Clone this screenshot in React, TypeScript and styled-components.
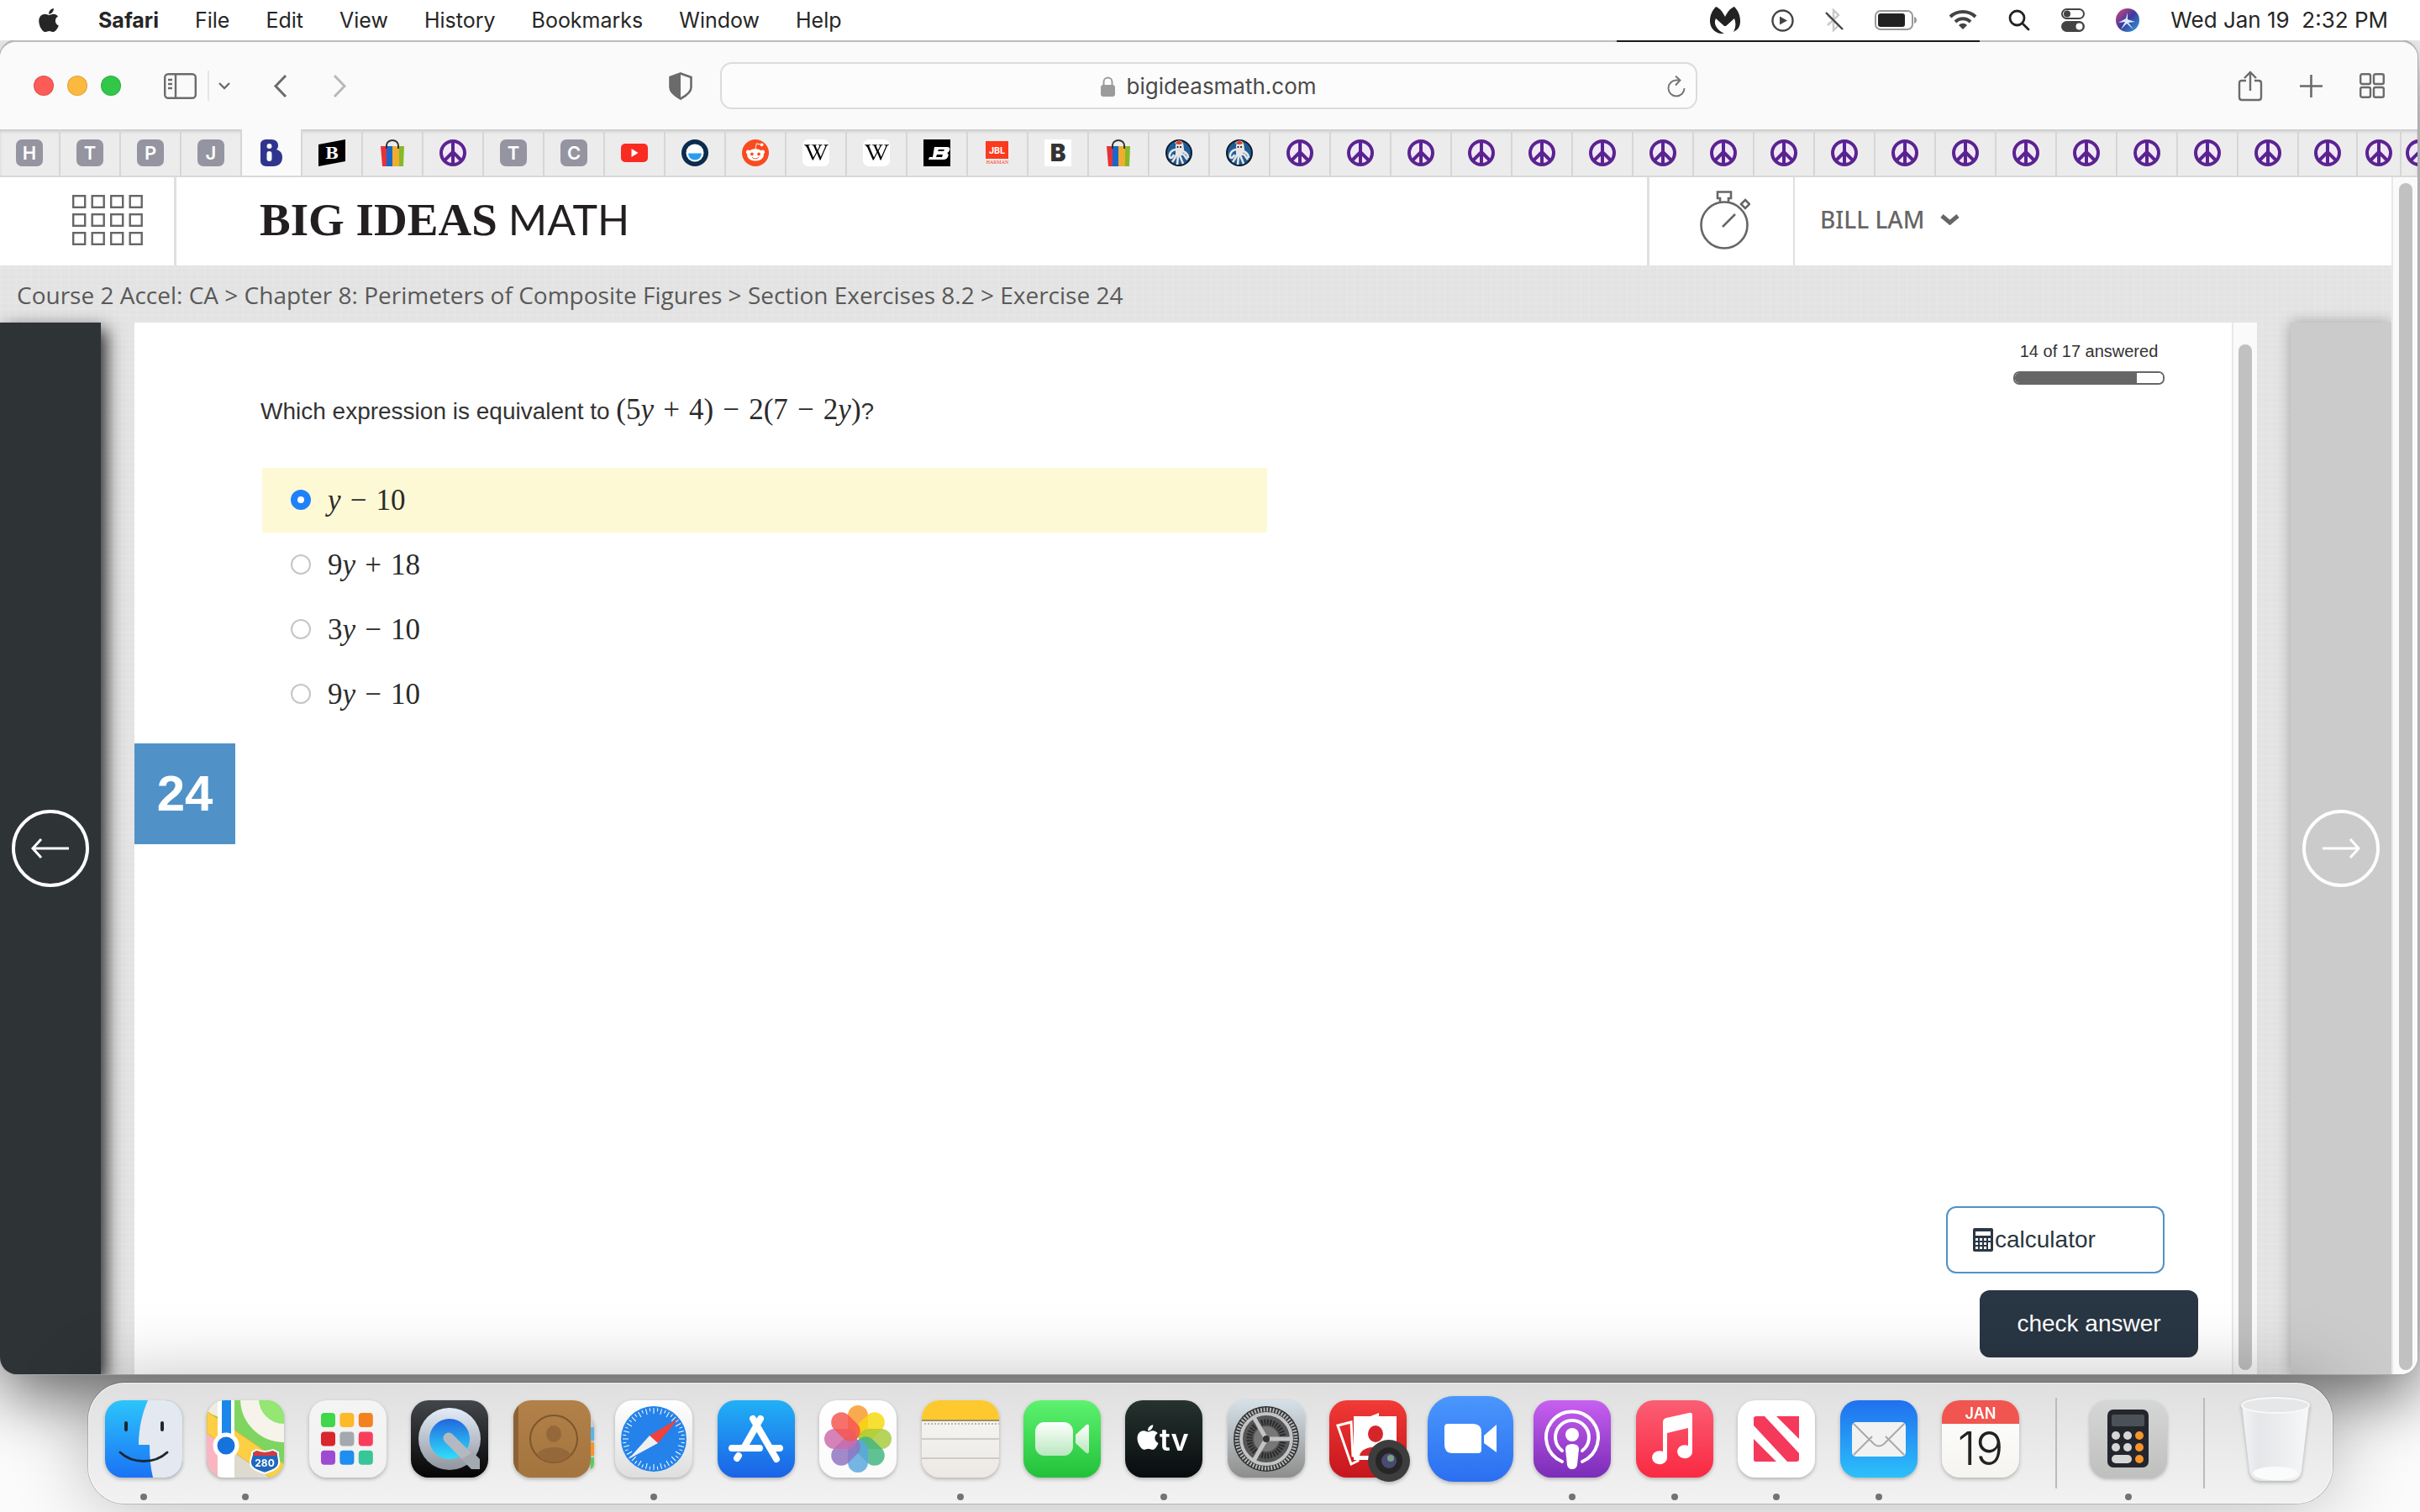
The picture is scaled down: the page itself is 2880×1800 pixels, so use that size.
import React from "react";
import styled, { createGlobalStyle, css } from "styled-components";
import { FaApple, FaWikipediaW, FaRedditAlien } from "react-icons/fa";

const UI = `Inter, "Liberation Sans", sans-serif`;
const HELV = `"Liberation Sans", Arial, sans-serif`;
const OPEN = `"Open Sans", "Noto Sans", sans-serif`;
const MATH = `"Liberation Serif", "Times New Roman", serif`;

const Global = createGlobalStyle`
  * { box-sizing: border-box; }
  body { margin: 0; background: #fbfbfb; font-family: ${UI}; color: #262626; }
  button { border: 0; padding: 0; background: none; font: inherit; color: inherit; cursor: pointer; }
  svg { display: block; flex: none; }
`;

const Desktop = styled.div`
  min-height: 100vh;
  display: flex;
  flex-direction: column;
  overflow: hidden;
`;

/* ---------- menu bar ---------- */

const MenuBar = styled.header`
  z-index: 1;
  height: 48px;
  display: flex;
  align-items: center;
  justify-content: space-between;
  padding: 0 38px 0 42px;
  font-size: 25px;
  line-height: 32px;
  background: #fff;
`;
const MenuGroup = styled.nav`
  display: flex;
  align-items: center;
  gap: 43px;
`;
const MenuItem = styled.button<{ $bold?: boolean }>`
  font-weight: ${(p) => (p.$bold ? 700 : 400)};
`;
const StatusGroup = styled.div`
  display: flex;
  align-items: center;
  gap: 37px;
`;
const Clock = styled.time`
  white-space: pre;
  font-size: 26px;
`;

/* ---------- browser window ---------- */

const Window = styled.section`
  flex: 1;
  display: flex;
  flex-direction: column;
  margin-right: 3px;
  border-radius: 20px;
  overflow: hidden;
  background: #fff;
  border-top: 2px solid #bdbdbd;
  box-shadow: 0 0 0 1px #a9a9a9, 0 24px 80px rgba(0, 0, 0, 0.62);
`;
const Notch = styled.span`
  z-index: 2;
  align-self: flex-end;
  width: 432px;
  height: 2px;
  margin: 0 524px -2px 0;
  background: #1a1a1a;
`;
const Toolbar = styled.div`
  height: 104px;
  display: grid;
  grid-template-columns: 1fr 40.4% 1fr;
  align-items: center;
  background: #fafafa;
  color: #6b6b6b;
`;
const ToolbarLeft = styled.div`
  display: flex;
  align-items: center;
  padding: 0 33px 0 40px;
`;
const ToolbarRight = styled.div`
  display: flex;
  align-items: center;
  justify-content: flex-end;
  gap: 44px;
  padding-right: 39px;
`;
const Lights = styled.div`
  display: flex;
  gap: 16px;
  margin-right: 51px;
`;
const Light = styled.button<{ $c: string }>`
  width: 24px;
  height: 24px;
  border-radius: 50%;
  background: ${(p) => p.$c};
  box-shadow: inset 0 0 0 1px rgba(0, 0, 0, 0.12);
`;
const ToolButton = styled.button<{ $gap?: number; $push?: boolean }>`
  display: flex;
  margin-left: ${(p) => (p.$push ? "auto" : `${p.$gap ?? 0}px`)};
`;
const ToolDivider = styled.span`
  width: 2px;
  height: 36px;
  margin-left: 13px;
  background: #e6e6e6;
`;
const UrlField = styled.div`
  height: 56px;
  display: grid;
  grid-template-columns: 1fr auto 1fr;
  align-items: center;
  padding-top: 2px;
  border: 2px solid #dcdcdc;
  border-radius: 14px;
  background: #fcfcfc;
`;
const UrlLabel = styled.label`
  grid-column: 2;
  display: flex;
  align-items: center;
  gap: 13px;
`;
const UrlInput = styled.input`
  width: 226px;
  border: 0;
  padding: 0;
  outline: 0;
  background: transparent;
  font: 400 26px/32px ${UI};
  color: #4a4a4a;
`;
const Reload = styled.button`
  justify-self: end;
  margin-right: 12px;
`;

const TabBar = styled.nav`
  height: 57px;
  display: flex;
  overflow: hidden;
  border-bottom: 2px solid #d9d9d9;
  background: #ececec;
  box-shadow: inset 0 3px 4px -1px rgba(0, 0, 0, 0.18);
`;
const Tab = styled.button<{ $w: number; $active?: boolean }>`
  flex: none;
  width: ${(p) => p.$w}px;
  display: flex;
  align-items: center;
  justify-content: center;
  border-right: 2px solid #d6d6d6;
  ${(p) => p.$active && css`background: #fafafa;`}
`;
const LetterIcon = styled.span`
  width: 32px;
  height: 32px;
  border-radius: 7px;
  background: #9495a0;
  color: #fff;
  font: 600 22px/32px ${UI};
  text-align: center;
`;
const WikiIcon = styled.span`
  width: 32px;
  height: 32px;
  border-radius: 7px;
  background: #fff;
  color: #000;
  display: flex;
  align-items: center;
  justify-content: center;
`;

/* ---------- page ---------- */

const Page = styled.div`
  flex: 1;
  display: flex;
`;
const PageBody = styled.div`
  flex: 1;
  min-width: 0;
  display: flex;
  flex-direction: column;
  background-color: #e3e3e3;
  background-image: repeating-linear-gradient(90deg, rgba(255, 255, 255, 0.08) 0 2px, transparent 2px 9px),
    repeating-linear-gradient(0deg, rgba(255, 255, 255, 0.08) 0 2px, transparent 2px 7px);
`;
const ScrollTrack = styled.div<{ $w: number; $top: number }>`
  flex: none;
  width: ${(p) => p.$w}px;
  display: flex;
  justify-content: center;
  padding: ${(p) => p.$top}px 0 5px;
  background: #fafafa;
  border-left: 2px solid #e8e8e8;
`;
const ScrollThumb = styled.div`
  width: 16px;
  border-radius: 8px;
  background: #c1c1c1;
`;
const SiteHeader = styled.header`
  height: 105px;
  display: flex;
  padding-bottom: 3px;
  background: #fff;
  color: #666;
`;
const AppsButton = styled.button`
  width: 210px;
  margin-bottom: -3px;
  display: flex;
  align-items: center;
  padding: 0 0 3px 86px;
  border-right: 3px solid #e0e0e0;
`;
const Brand = styled.a`
  flex: 1;
  display: flex;
  align-items: baseline;
  gap: 13px;
  padding: 14px 0 0 99px;
  color: #231f20;
  text-decoration: none;
  line-height: 72px;
`;
const BrandSerif = styled.span`
  font-family: ${MATH};
  font-weight: 700;
  font-size: 55px;
`;
const BrandSans = styled.span`
  font-family: Lato, sans-serif;
  font-size: 50px;
`;
const TimerButton = styled.button`
  width: 174px;
  margin-bottom: -3px;
  display: flex;
  align-items: center;
  justify-content: center;
  padding: 0 0 3px 8px;
  border-left: 3px solid #e0e0e0;
`;
const UserButton = styled.button`
  width: 712px;
  margin-bottom: -3px;
  display: flex;
  align-items: center;
  gap: 19px;
  padding: 0 0 5px 30px;
  border-left: 2px solid #e0e0e0;
  font: 500 28px/40px "Noto Sans", sans-serif;
`;
const Crumbs = styled.nav`
  height: 68px;
  padding: 0 20px;
  font: 400 28px/70px ${OPEN};
  color: #595959;
  white-space: nowrap;
`;
const Crumb = styled.a`
  color: inherit;
  text-decoration: none;
`;
const Stage = styled.div`
  flex: 1;
  display: flex;
`;
const SideNav = styled.button<{ $next?: boolean }>`
  width: 120px;
  display: flex;
  align-items: center;
  justify-content: center;
  color: #fff;
  background: ${(p) => (p.$next ? "#cbcbcb" : "#2e3336")};
  box-shadow: ${(p) => (p.$next ? "0 0 16px rgba(0,0,0,.3)" : "6px 8px 20px rgba(0,0,0,.85)")};
`;
const Card = styled.main`
  flex: 1;
  display: flex;
  margin: 0 40px;
  background: #fff;
  font-family: ${HELV};
  color: #333;
`;
const NumberBadge = styled.div`
  flex: none;
  width: 120px;
  height: 120px;
  margin-top: 501px;
  background: #5092c8;
  color: #fff;
  font-weight: 700;
  font-size: 60px;
  line-height: 120px;
  text-align: center;
`;
const Content = styled.div`
  flex: 1;
  display: flex;
  flex-direction: column;
  padding: 0 0 20px 30px;
`;
const TopRow = styled.div`
  display: flex;
  justify-content: space-between;
  padding-right: 80px;
`;
const Question = styled.h1`
  margin: 0;
  padding-top: 84px;
  font-size: 28px;
  line-height: 40px;
  font-weight: 400;
`;
const Math = styled.span`
  font-family: ${MATH};
  font-size: 35px;
  line-height: 40px;
  color: #2b2b2b;
`;
const Op = styled.span`
  display: inline-block;
  width: 26px;
  margin: 0 8px;
  text-align: center;
`;
const Progress = styled.label`
  width: 180px;
  display: flex;
  flex-direction: column;
  align-items: center;
  gap: 12px;
  padding-top: 22px;
  font-size: 20px;
  line-height: 24px;
`;
const Meter = styled.progress`
  appearance: none;
  width: 180px;
  height: 16px;
  border: 2px solid #666;
  border-radius: 7px;
  overflow: hidden;
  background: #fff;
  &::-webkit-progress-bar { background: #fff; }
  &::-webkit-progress-value { background: #666; }
`;
const Choices = styled.fieldset`
  width: 51%;
  border: 0;
  margin: 47px 0 0 2px;
  padding: 0;
`;
const Choice = styled.label<{ $on?: boolean }>`
  height: 77px;
  display: flex;
  align-items: center;
  gap: 20px;
  padding-left: 34px;
  background: ${(p) => (p.$on ? "#fdf9d5" : "transparent")};
`;
const Radio = styled.input`
  appearance: none;
  width: 24px;
  height: 24px;
  margin: 0 0 2px;
  border: 2px solid #c6c6c6;
  border-radius: 50%;
  background: #fff;
  &:checked {
    border: 8px solid #1e82fa;
  }
`;
const Actions = styled.div`
  margin-top: auto;
  display: flex;
  flex-direction: column;
  align-items: flex-end;
  gap: 20px;
  padding-right: 40px;
`;
const ActionButton = styled.button<{ $solid?: boolean }>`
  width: 260px;
  height: 80px;
  display: flex;
  align-items: center;
  gap: 2px;
  border-radius: 12px;
  font-size: 28px;
  line-height: 40px;
  ${(p) =>
    p.$solid
      ? css`
          justify-content: center;
          background: #293644;
          color: #fff;
        `
      : css`
          margin-right: 40px;
          padding-left: 30px;
          background: #fff;
          border: 2px solid #5092c8;
          color: #293640;
        `}
`;

/* ---------- dock ---------- */

const Dock = styled.nav`
  z-index: 1;
  height: 144px;
  margin: 10px 104px 10px 105px;
  padding: 0 16px 0 5px;
  display: grid;
  grid-template-columns: repeat(19, 1fr) 58px 114px 66px 104px;
  border-radius: 44px;
  background: linear-gradient(#dfdfdf, #e9e9e9 50%, #f2f2f2);
  box-shadow: 0 0 0 1px rgba(0, 0, 0, 0.18), 0 0 90px rgba(0, 0, 0, 0.28), inset 0 0 0 1px rgba(255, 255, 255, 0.5);
`;
const DockItem = styled.button<{ $open?: boolean }>`
  display: flex;
  flex-direction: column;
  align-items: center;
  justify-content: space-between;
  padding: 15px 0 4px;
  &::after {
    content: "";
    width: 8px;
    height: 8px;
    border-radius: 50%;
    background: ${(p) => (p.$open ? "#737373" : "transparent")};
  }
`;
const DockRule = styled.span`
  width: 2px;
  height: 108px;
  margin: 18px auto 0;
  background: #bbb;
`;
const DockSvg = styled.svg`
  width: 104px;
  height: 104px;
  overflow: visible;
  filter: drop-shadow(0 2px 2px rgba(0, 0, 0, 0.25));
`;

/* ---------- tab icons ---------- */

const Peace = () => (
  <svg width="32" height="32" viewBox="0 0 32 32" fill="none" stroke="#5b2391" strokeWidth="4">
    <circle cx="16" cy="16" r="14" fill="#f0e9f5" />
    <path d="M16 2v28M16 15 6 25M16 15l10 10" />
  </svg>
);
const Bag = () => (
  <svg width="32" height="32" viewBox="0 0 32 32">
    <path d="M2 8h7v24H4z" fill="#e53238" />
    <path d="M9 8h7v24H9z" fill="#1b66c9" />
    <path d="M16 8h8v24h-8z" fill="#f0ad2e" />
    <path d="M24 8h6l-1 24h-5z" fill="#86b82b" />
    <path d="M9 11V7a7 6 0 0 1 14 0v4" fill="none" stroke="#333" strokeWidth="2" />
  </svg>
);
const BigIdeas = () => (
  <svg width="26" height="32" viewBox="0 0 26 32">
    <path d="M7 0h6c5 0 8 3 8 7 0 3-1 4-2 5 4 1 7 4 7 9 0 7-4 11-11 11H7c-4 0-7-3-7-6V6c0-4 3-6 7-6z" fill="#2f358e" />
    <circle cx="10.500" cy="8" r="3" fill="#fafafa" />
    <rect x="7.500" y="14" width="6" height="12" rx="3" fill="#fafafa" />
  </svg>
);
const SlantB = () => (
  <svg width="32" height="32" viewBox="0 0 32 32">
    <path d="M0 6 32 0v26L0 32z" fill="#000" />
    <text x="16" y="23" textAnchor="middle" fontFamily="DejaVu Serif, serif" fontWeight="700" fontSize="19" fill="#fff">B</text>
  </svg>
);
const YouTube = () => (
  <svg width="32" height="32" viewBox="0 0 32 32">
    <rect y="5" width="32" height="22" rx="5" fill="#fa2b20" />
    <path d="m12.500 11 8 5-8 5z" fill="#fff" />
  </svg>
);
const Ring = () => (
  <svg width="32" height="32" viewBox="0 0 32 32">
    <circle cx="16" cy="16" r="16" fill="#0c2c4d" />
    <circle cx="16" cy="16" r="10.500" fill="#fff" />
    <path d="M8 16.500h16a8 8 0 0 1-16 0z" fill="#2f9bf0" />
  </svg>
);
const Reddit = () => (
  <svg width="32" height="32" viewBox="0 0 32 32">
    <circle cx="16" cy="16" r="16" fill="#f84b20" />
    <FaRedditAlien x="4" y="3" size={24} color="#fff" />
  </svg>
);
const SportB = () => (
  <svg width="32" height="32" viewBox="0 0 32 32">
    <path d="M0 0h32v32H0z" />
    <path d="M13 9h15c3 0 4 2 3 4s-2 3-3 3c2 1 2 3 1 5s-3 3-5 3H6l1-3h4z" fill="#fff" />
    <path d="m18 12-1 2h7l1-2zM16 18l-1 3h7l1-3z" />
  </svg>
);
const Jbl = () => (
  <svg width="32" height="32" viewBox="0 0 32 32">
    <path d="M2 2h27v21H2z" fill="#fb3a1e" />
    <text x="15.500" y="17" textAnchor="middle" fontFamily="Roboto, sans-serif" fontWeight="700" fontSize="11" fill="#fff">JBL</text>
    <text x="16" y="29" textAnchor="middle" fontFamily="Liberation Serif, serif" fontSize="6" fill="#fb3a1e">HARMAN</text>
  </svg>
);
const WhiteB = () => (
  <svg width="32" height="32" viewBox="0 0 32 32">
    <path d="M0 0h32v32H0z" fill="#fff" />
    <text x="16" y="26" textAnchor="middle" fontFamily="Inter, sans-serif" fontWeight="900" fontSize="28" fill="#333">B</text>
  </svg>
);
const Squid = () => (
  <svg width="32" height="32" viewBox="0 0 32 32">
    <circle cx="16" cy="16" r="15" fill="#1f5c94" stroke="#111a2e" strokeWidth="2" />
    <path d="M12 5c2-3 7-3 8 1l1 8c4 2 6 4 6 8M13 12c-5 0-9 4-8 9 2 2 4 0 5-3m3 0c-1 4-3 6-5 9m7-8-1 11m3-11 4 10m0-12 5 7" fill="none" stroke="#e6e6e6" strokeWidth="2.600" />
    <path d="M12 7c0-3 8-3 8 0l1 12h-9z" fill="#e6e6e6" />
    <path d="M12 5c1-4 7-4 8 0l-4 1z" fill="#d33a26" />
    <circle cx="14.500" cy="9" r="1" /><circle cx="18" cy="9" r="1" />
  </svg>
);

const letter = (l: string) => () => <LetterIcon>{l}</LetterIcon>;
const Wiki = () => (
  <WikiIcon>
    <FaWikipediaW size={29} />
  </WikiIcon>
);

type TabData = { name: string; icon: React.FC; width: number; active?: boolean };
const favicons: [string, React.FC][] = [
  ["H", letter("H")], ["T", letter("T")], ["P", letter("P")], ["J", letter("J")],
  ["Big Ideas Math", BigIdeas], ["B", SlantB], ["Shopping", Bag], ["Peace", Peace],
  ["T", letter("T")], ["C", letter("C")], ["YouTube", YouTube], ["Ring", Ring],
  ["Reddit", Reddit], ["Wikipedia", Wiki], ["Wikipedia", Wiki], ["Sport", SportB],
  ["JBL", Jbl], ["B", WhiteB], ["Shopping", Bag], ["Squid", Squid], ["Squid", Squid],
];
const tabs: TabData[] = [
  ...favicons.map(([name, icon], i) => ({ name, icon, width: 72, active: i === 4 })),
  ...Array.from({ length: 20 }, (_, i) => ({ name: "Peace", icon: Peace, width: i === 17 ? 70 : i === 18 ? 52 : i === 19 ? 44 : 72 })),
];

/* ---------- status icons ---------- */

const StatusIcons = () => (
  <>
    <svg width="36" height="32" viewBox="0 0 36 32" fill="#222">
      <path d="M7 0c5 2 8 6 11 12C21 6 24 2 29 0c5 5 7 11 7 17 0 6-2 10-8 13 3-6 3-11 1-16l-10 9h-2L7 14c-3 6 0 13 10 18C6 33 0 25 0 17 0 11 2 5 7 0z" />
    </svg>
    <svg width="27" height="27" viewBox="0 0 27 27" fill="none" stroke="#444" strokeWidth="2.400">
      <circle cx="13.500" cy="13.500" r="12" />
      <path d="m10 8.500 9 5-9 5z" fill="#444" stroke="none" />
    </svg>
    <svg width="22" height="28" viewBox="0 0 22 28" fill="none" strokeWidth="2.400">
      <path d="M3 8l13 12-6 6V2l6 6L3 20" stroke="#c9c9c9" />
      <path d="m1 5 20 20" stroke="#444" />
    </svg>
    <svg width="51" height="24" viewBox="0 0 51 24">
      <rect x="1" y="1" width="44" height="22" rx="6" fill="none" stroke="#999" strokeWidth="2" />
      <rect x="4" y="4" width="32" height="16" rx="3" fill="#222" />
      <path d="M47 8c4 1 4 7 0 8z" fill="#999" />
    </svg>
    <svg width="34" height="26" viewBox="0 0 34 26" fill="none" stroke="#444" strokeWidth="4">
      <path d="M2 9c8-8 22-8 30 0M8 15c5-5 13-5 18 0" />
      <path d="m12 19 5 5 5-5c-3-3-7-3-10 0z" fill="#444" stroke="none" />
    </svg>
    <svg width="26" height="26" viewBox="0 0 26 26" fill="none" stroke="#222" strokeWidth="2.800">
      <circle cx="10.500" cy="10.500" r="8.500" />
      <path d="m17 17 7 7" strokeLinecap="round" />
    </svg>
    <svg width="28" height="28" viewBox="0 0 28 28">
      <rect x="1" y="1" width="26" height="11" rx="5.500" fill="none" stroke="#444" strokeWidth="2" />
      <circle cx="7" cy="6.500" r="4" fill="#444" />
      <rect y="15" width="28" height="13" rx="6.500" fill="#444" />
      <circle cx="21.500" cy="21.500" r="4" fill="#fff" />
    </svg>
    <svg width="28" height="28" viewBox="0 0 28 28">
      <defs>
        <linearGradient id="siri" x2="1" y2="1">
          <stop stopColor="#e0447e" /><stop offset=".5" stopColor="#3d3a9c" /><stop offset="1" stopColor="#2aa9e0" />
        </linearGradient>
      </defs>
      <circle cx="14" cy="14" r="14" fill="url(#siri)" />
      <path d="M14 5v8l9 3-8 1 6 8-8-7-7 7 5-9-8 1 9-5z" fill="#d8ecff" />
    </svg>
  </>
);

/* ---------- dock icons, drawn on a 92 unit tile with a 6 unit border ---------- */

const Tile = ({ id, a, b, children, over }: { id: string; a: string; b: string; children?: React.ReactNode; over?: React.ReactNode }) => (
  <DockSvg viewBox="-6 -6 104 104" aria-hidden="true">
    <defs>
      <linearGradient id={id} x2="0" y2="1"><stop stopColor={a} /><stop offset="1" stopColor={b} /></linearGradient>
      <clipPath id={`${id}-clip`}><rect width="92" height="92" rx="21" /></clipPath>
    </defs>
    <g clipPath={`url(#${id}-clip)`}>
      <rect width="92" height="92" fill={`url(#${id})`} />
      {children}
    </g>
    {over}
  </DockSvg>
);

const Finder = () => (
  <Tile id="finder" a="#2cc5fb" b="#1a72f5">
    <path d="M51 0C44 16 40 34 40 53h13c0 14 1 27 4 39h35V0z" fill="#e4e8f0" />
    <path d="M25 27v8M68 27v8" stroke="#1c2733" strokeWidth="4" strokeLinecap="round" />
    <path d="M18 62c15 14 41 14 56 0" fill="none" stroke="#1c2733" strokeWidth="3" strokeLinecap="round" />
  </Tile>
);
const Maps = () => (
  <Tile id="maps" a="#7fd65f" b="#7cd360">
    <path d="M0 0h14v20L0 14z" fill="#f1ece2" />
    <path d="M0 38v54h34V50z" fill="#f9b6c2" />
    <path d="M30 92 34 50l58 42z" fill="#dedacf" />
    <path d="M0 13 92 76v22H84L0 39z" fill="#fccf45" stroke="#e9b53a" />
    <circle cx="92" cy="-2" r="41" fill="#93e772" stroke="#f5f3ea" strokeWidth="22" />
    <path d="M13 0h20v92H13z" fill="#fff" />
    <path d="M18 0h11v52H18z" fill="#1b87ea" />
    <circle cx="23" cy="54" r="13" fill="#1673dd" stroke="#fff" strokeWidth="5" />
    <path d="m54 62 5-3q10 4 20 0l6 3c-1 5 2 8 1 13-1 7-9 9-17 12-8-3-16-5-17-12-1-5 3-8 2-13z" fill="#2168bd" stroke="#fff" strokeWidth="2" />
    <path d="m56 62 4-2q9 4 18 0l5 2v4H56z" fill="#d8393e" />
    <text x="69" y="79" textAnchor="middle" fontFamily="Inter, sans-serif" fontWeight="700" fontSize="12" fill="#fff">280</text>
  </Tile>
);
const Launchpad = () => (
  <Tile id="launch" a="#f4f4f4" b="#f1f1f1">
    {["#42d64a", "#fcb928", "#f48120", "#d8262c", "#a3a9ad", "#f93e5c", "#9e4bd4", "#1e8ef0", "#37c59a"].map((c, i) => (
      <rect key={c} x={14 + (i % 3) * 22.4} y={15 + ((i - (i % 3)) / 3) * 22.4} width="17" height="17" rx="4" fill={c} />
    ))}
  </Tile>
);
const QuickTime = () => (
  <Tile id="qt" a="#43464b" b="#050505">
    <defs>
      <linearGradient id="qt-face" x2="0" y2="1"><stop stopColor="#2267dd" /><stop offset="1" stopColor="#2fe0fc" /></linearGradient>
      <linearGradient id="qt-ring" x2="0" y2="1"><stop stopColor="#e3ecfa" /><stop offset="1" stopColor="#8f959d" /></linearGradient>
    </defs>
    <circle cx="46" cy="46" r="37" fill="url(#qt-ring)" />
    <circle cx="46" cy="46" r="24" fill="url(#qt-face)" />
    <path d="M45 45 74 74" stroke="#b4b9c1" strokeWidth="13" strokeLinecap="round" />
    <path d="m60 70 12 12h10V70l-8-8z" fill="#a4a9b1" />
  </Tile>
);
const Contacts = () => (
  <Tile id="contacts" a="#b2814a" b="#a4743e" over={<><path d="M92 22q4 2 4 8v2h-4z" fill="#c9ccc9" /><path d="M92 32h4v16h-4z" fill="#5ab5e8" /><path d="M92 50h4v16h-4z" fill="#f59331" /><path d="M92 68h4v6q0 6-4 8z" fill="#5bcb5f" /></>}>
    <path d="M0 0h6v92H0z" fill="#8d6233" />
    <g fill="#94683a" stroke="#7e562b" strokeWidth="2">
      <circle cx="48" cy="46" r="28" fill="none" />
      <ellipse cx="48" cy="40" rx="9" ry="10" stroke="none" />
      <path d="M28 65c5-12 35-12 40 0-10 12-30 12-40 0z" stroke="none" />
    </g>
  </Tile>
);
const Safari = () => (
  <Tile id="safari" a="#ffffff" b="#dedede">
    <circle cx="46" cy="46" r="39" fill="#2482ea" />
    {Array.from({ length: 48 }, (_, i) => (
      <path key={i} d={i % 2 ? "M46 9v4" : "M46 9v7"} stroke="#fff" strokeWidth="1" transform={`rotate(${i * 7.5} 46 46)`} />
    ))}
    <path d="m75 22-24 29-10-9z" fill="#f4403b" />
    <path d="m16 70 25-28 10 9z" fill="#f0f0f0" />
  </Tile>
);
const AppStore = () => (
  <Tile id="store" a="#21b0f6" b="#1b62e6">
    <g stroke="#fff" strokeWidth="8" strokeLinecap="round">
      <path d="M51 22 31 57M42 22l28 48M17 57h33M63 57h11M23 69l2-3" />
    </g>
  </Tile>
);
const Photos = () => (
  <Tile id="photos" a="#ffffff" b="#fafafa">
    {["#f99a2c", "#f5d90f", "#a8cb3b", "#43b581", "#59a7df", "#8f74c0", "#cc6bab", "#f5564f"].map((c, i) => (
      <rect key={c} x="34" y="6" width="24" height="39" rx="12" fill={c} opacity=".84" transform={`rotate(${i * 45} 46 46)`} />
    ))}
  </Tile>
);
const Notes = () => (
  <Tile id="notes" a="#f8f7f5" b="#ece9e4">
    <path d="M0 0h92v23H0z" fill="#fdc92e" />
    <path d="M0 24h92" stroke="#9d9160" strokeWidth="2" />
    <path d="M3 28h89" stroke="#b5b5b5" strokeWidth="2" strokeDasharray="2 2" />
    <path d="M0 46h92M0 69h92" stroke="#cfccc7" strokeWidth="2" />
  </Tile>
);
const FaceTime = () => (
  <Tile id="facetime" a="#5df26f" b="#22c13a">
    <defs><linearGradient id="ft-body" x2="0" y2="1"><stop stopColor="#fdfffd" /><stop offset="1" stopColor="#b9e8bf" /></linearGradient></defs>
    <g fill="url(#ft-body)">
      <rect x="14" y="26" width="45" height="40" rx="11" />
      <path d="m62 41 13-12q3-1 3 2v30q0 3-3 2L62 51z" />
    </g>
  </Tile>
);
const AppleTv = () => (
  <Tile id="tv" a="#26332f" b="#080c0e">
    <FaApple x="10" y="27" size={34} color="#fff" />
    <text x="41" y="60" fontFamily="Inter, sans-serif" fontWeight="600" fontSize="36" fill="#fff">tv</text>
  </Tile>
);
const Settings = () => (
  <Tile id="settings" a="#d5e1ea" b="#8e8d8b">
    <circle cx="46" cy="46" r="39" fill="#303030" />
    <circle cx="46" cy="46" r="35" fill="none" stroke="#b5b7b8" strokeWidth="5" strokeDasharray="2 1.665" />
    <circle cx="46" cy="46" r="30" fill="#555" stroke="#c2c4c6" strokeWidth="4" />
    <circle cx="46" cy="46" r="20" fill="none" stroke="#2b2b2b" strokeWidth="7" strokeDasharray="2 1.500" />
    <circle cx="46" cy="46" r="15" fill="#777" />
    <path d="M46 46h30M46 46 31 20M46 46 31 72" stroke="#c2c4c6" strokeWidth="5" />
    <circle cx="46" cy="46" r="4" fill="#333" />
  </Tile>
);
const PhotoBooth = () => (
  <Tile id="booth" a="#f23a36" b="#c5151d" over={<><circle cx="71" cy="72" r="25" fill="#3d3d3d" /><circle cx="71" cy="72" r="16" fill="#262626" /><circle cx="71" cy="72" r="9" fill="#4b4a72" /><circle cx="73" cy="69" r="4" fill="#7aa08a" /></>}>
    <path d="m10 30 16-4 2 40 6 1v5l-8 4z" fill="none" stroke="#fff" strokeWidth="3" />
    <path d="m49 19 10-4v4z" fill="#fff" />
    <rect x="31" y="21" width="47" height="48" fill="none" stroke="#fff" strokeWidth="4" />
    <path d="M31 21h47v48H31z" fill="#fff" />
    <ellipse cx="55" cy="40" rx="9" ry="10" fill="#d4262a" />
    <path d="M36 66c2-14 35-14 38 0z" fill="#d4262a" />
  </Tile>
);
const Zoom = () => (
  <DockSvg viewBox="-6 -6 104 104" aria-hidden="true">
    <defs><linearGradient id="zoom" x2="0" y2="1"><stop stopColor="#4a97fd" /><stop offset="1" stopColor="#2b6ff0" /></linearGradient></defs>
    <rect x="-5" y="-5" width="102" height="102" rx="31" fill="url(#zoom)" />
    <path d="M15 32q0-4 4-4h30q10 0 10 10v21q0 4-4 4H25q-10 0-10-10zM62 42l15-13v33L62 51z" fill="#fff" />
  </DockSvg>
);
const Podcasts = () => (
  <Tile id="podcasts" a="#c760f0" b="#7a2cb8">
    <g fill="none" stroke="#fff" strokeWidth="4" strokeLinecap="round">
      <path d="M34 73a31 31 0 1 1 24 0" />
      <path d="M34 60a20 20 0 1 1 24 0" />
    </g>
    <circle cx="46" cy="41" r="8" fill="#fff" />
    <path d="M38 58q0-6 8-6t8 6l-2 19q-1 5-6 5t-6-5z" fill="#fff" />
  </Tile>
);
const Music = () => (
  <Tile id="music" a="#fb5e74" b="#fa2942">
    <path d="M32 26q0-4 4-5l27-6q4-1 4 3v43a9 8 0 1 1-5-7V33l-25 6v29a9 8 0 1 1-5-7z" fill="#fff" />
  </Tile>
);
const News = () => (
  <Tile id="news" a="#ffffff" b="#ffffff">
    <g fill="#f5395b">
      <path d="M19 22q0-3 3-3h10l41 44v7q0 3-3 3H59L19 30z" />
      <path d="M46 19h27v27zM19 46l27 27H21q-2 0-2-3z" />
    </g>
  </Tile>
);
const Mail = () => (
  <Tile id="mail" a="#2070ee" b="#2cc0fb">
    <rect x="14" y="26" width="64" height="41" rx="5" fill="#f2f2f2" />
    <path d="m16 65 22-22M76 65 54 43M16 28l24 24q6 5 12 0l24-24" fill="none" stroke="#a9a9a9" strokeWidth="2" />
  </Tile>
);
const Calendar = () => (
  <Tile id="calendar" a="#ffffff" b="#f5f4f0">
    <path d="M0 0h92v28H0z" fill="#f0564f" />
    <text x="46" y="22" textAnchor="middle" fontFamily="Inter, sans-serif" fontWeight="600" fontSize="18" fill="#fff">JAN</text>
    <text x="46" y="77" textAnchor="middle" fontFamily="Inter, sans-serif" fontWeight="300" fontSize="55" fill="#222">19</text>
  </Tile>
);
const Calculator = () => (
  <Tile id="calc" a="#d5d7d6" b="#bfc0be">
    <rect x="21" y="11" width="49" height="69" rx="7" fill="#23262d" />
    <rect x="26" y="17" width="39" height="14" rx="2" fill="#4c5057" />
    {[0, 1].map((r) => [0, 1, 2].map((c) => <circle key={`${r}${c}`} cx={31 + c * 14} cy={42 + r * 14} r="5" fill={c === 2 ? "#f7942a" : "#d6d6d6"} />))}
    <rect x="26" y="65" width="24" height="10" rx="5" fill="#d6d6d6" />
    <circle cx="59" cy="70" r="5" fill="#f7942a" />
  </Tile>
);
const Trash = () => (
  <DockSvg viewBox="-6 -6 104 104" aria-hidden="true">
    <defs>
      <linearGradient id="bin"><stop stopColor="#f3f4f5" /><stop offset=".25" stopColor="#e4e6e9" /><stop offset=".7" stopColor="#eef0f1" /><stop offset="1" stopColor="#f7f8f8" /></linearGradient>
    </defs>
    <path d="M6 6h80l-9 78q-2 12-14 12H29q-12 0-14-12z" fill="url(#bin)" />
    <ellipse cx="46" cy="6" rx="40" ry="9" fill="#e6e7e8" stroke="#f9f9f9" strokeWidth="2" />
    <ellipse cx="46" cy="87" rx="27" ry="8" fill="#fafbfb" />
  </DockSvg>
);

const dock: { name: string; icon: React.FC; open?: boolean }[] = [
  { name: "Finder", icon: Finder, open: true },
  { name: "Maps", icon: Maps, open: true },
  { name: "Launchpad", icon: Launchpad },
  { name: "QuickTime Player", icon: QuickTime },
  { name: "Contacts", icon: Contacts },
  { name: "Safari", icon: Safari, open: true },
  { name: "App Store", icon: AppStore },
  { name: "Photos", icon: Photos },
  { name: "Notes", icon: Notes, open: true },
  { name: "FaceTime", icon: FaceTime },
  { name: "TV", icon: AppleTv, open: true },
  { name: "System Preferences", icon: Settings },
  { name: "Photo Booth", icon: PhotoBooth },
  { name: "Zoom", icon: Zoom },
  { name: "Podcasts", icon: Podcasts, open: true },
  { name: "Music", icon: Music, open: true },
  { name: "News", icon: News, open: true },
  { name: "Mail", icon: Mail, open: true },
  { name: "Calendar", icon: Calendar },
];

/* ---------- exercise ---------- */

const Y = () => <i>y</i>;
const choices = [
  { id: "a", lead: "", op: "−", tail: "10" },
  { id: "b", lead: "9", op: "+", tail: "18" },
  { id: "c", lead: "3", op: "−", tail: "10" },
  { id: "d", lead: "9", op: "−", tail: "10" },
];
const crumbs = ["Course 2 Accel: CA", "Chapter 8: Perimeters of Composite Figures", "Section Exercises 8.2", "Exercise 24"];

const CircleArrow = ({ right }: { right?: boolean }) => (
  <svg width="92" height="92" viewBox="0 0 92 92" fill="none" stroke="currentColor" strokeWidth="4">
    <circle cx="46" cy="46" r="44" />
    <path d={right ? "M24 46h43M57 35l10 11-10 11" : "M68 46H25M35 35 25 46l10 11"} strokeWidth="3" />
  </svg>
);

export default function App() {
  const [picked, setPicked] = React.useState("a");
  return (
    <Desktop>
      <Global />
      <MenuBar>
        <MenuGroup>
          <MenuItem aria-label="Apple"><FaApple size={32} /></MenuItem>
          <MenuItem $bold>Safari</MenuItem>
          {["File", "Edit", "View", "History", "Bookmarks", "Window", "Help"].map((m) => (
            <MenuItem key={m}>{m}</MenuItem>
          ))}
        </MenuGroup>
        <StatusGroup>
          <StatusIcons />
          <Clock>{"Wed Jan 19  2:32 PM"}</Clock>
        </StatusGroup>
      </MenuBar>
      <Notch />

      <Window>
        <Toolbar>
          <ToolbarLeft>
            <Lights>
              <Light $c="#fc5b57" aria-label="Close" />
              <Light $c="#fcb93f" aria-label="Minimise" />
              <Light $c="#32c748" aria-label="Full screen" />
            </Lights>
            <ToolButton aria-label="Sidebar">
              <svg width="39" height="31" viewBox="0 0 39 31" fill="none" stroke="currentColor" strokeWidth="2.400">
                <rect x="1.200" y="1.200" width="36.600" height="28.600" rx="4" />
                <path d="M14 1v29M5 8h5M5 13h5M5 18h5" />
              </svg>
            </ToolButton>
            <ToolDivider />
            <ToolButton $gap={11} aria-label="Tab groups">
              <svg width="14" height="9" viewBox="0 0 14 9" fill="none" stroke="currentColor" strokeWidth="2.400"><path d="m1 1 6 6 6-6" /></svg>
            </ToolButton>
            <ToolButton $gap={51} aria-label="Back">
              <svg width="17" height="29" viewBox="0 0 17 29" fill="none" stroke="currentColor" strokeWidth="3"><path d="M15 2 3 14.500 15 27" /></svg>
            </ToolButton>
            <ToolButton $gap={54} aria-label="Forward">
              <svg width="17" height="29" viewBox="0 0 17 29" fill="none" stroke="#b9b9b9" strokeWidth="3"><path d="m2 2 12 12.500L2 27" /></svg>
            </ToolButton>
            <ToolButton $push aria-label="Privacy report">
              <svg width="28" height="33" viewBox="0 0 28 33">
                <path d="M14 1.500 26.500 6v12c0 6-6 10-12.500 13.500C7.500 28 1.500 24 1.500 18V6z" fill="none" stroke="currentColor" strokeWidth="2.600" />
                <path d="M14 1.500v30C7.500 28 1.500 24 1.500 18V6z" fill="currentColor" />
              </svg>
            </ToolButton>
          </ToolbarLeft>
          <UrlField>
            <UrlLabel>
              <svg width="17" height="24" viewBox="0 0 17 24" aria-hidden="true">
                <rect y="10" width="17" height="14" rx="3" fill="#9b9b9b" />
                <path d="M3.500 11V6.500a5 5 0 0 1 10 0V11" fill="none" stroke="#9b9b9b" strokeWidth="2" />
              </svg>
              <UrlInput aria-label="Address" defaultValue="bigideasmath.com" />
            </UrlLabel>
            <Reload aria-label="Reload">
              <svg width="22" height="26" viewBox="0 0 22 26" fill="none" stroke="#777" strokeWidth="2">
                <path d="M15 5.500h-4a9.500 9.500 0 1 0 9.500 9.500M10 .500l5.500 5-5.500 6" />
              </svg>
            </Reload>
          </UrlField>
          <ToolbarRight>
            <ToolButton aria-label="Share">
              <svg width="30" height="37" viewBox="0 0 30 37" fill="none" stroke="currentColor" strokeWidth="2.400">
                <path d="M10 12H5q-3 0-3 3v17q0 3 3 3h20q3 0 3-3V15q0-3-3-3h-5M15 24V2M8 9l7-7 7 7" />
              </svg>
            </ToolButton>
            <ToolButton aria-label="New tab">
              <svg width="27" height="27" viewBox="0 0 27 27" fill="none" stroke="currentColor" strokeWidth="2.600"><path d="M13.500 0v27M0 13.500h27" /></svg>
            </ToolButton>
            <ToolButton aria-label="Tab overview">
              <svg width="30" height="30" viewBox="0 0 30 30" fill="none" stroke="currentColor" strokeWidth="2.400">
                {[1.2, 17].map((x) => [1.2, 17].map((y) => <rect key={`${x}${y}`} x={x} y={y} width="11.800" height="11.800" rx="2" />))}
              </svg>
            </ToolButton>
          </ToolbarRight>
        </Toolbar>

        <TabBar>
          {tabs.map((t, i) => (
            <Tab key={i} $w={t.width} $active={t.active} aria-label={t.name}><t.icon /></Tab>
          ))}
        </TabBar>

        <Page>
          <PageBody>
            <SiteHeader>
              <AppsButton aria-label="Apps">
                <svg width="84" height="60" viewBox="0 0 84 60" fill="none" stroke="currentColor" strokeWidth="2.400">
                  {[0, 1, 2].map((r) => [0, 1, 2, 3].map((c) => <rect key={`${r}${c}`} x={1.2 + c * 22.5} y={1.2 + r * 22} width="14" height="13.600" />))}
                </svg>
              </AppsButton>
              <Brand href="#">
                <BrandSerif>BIG IDEAS</BrandSerif>
                <BrandSans>MATH</BrandSans>
              </Brand>
              <TimerButton aria-label="Timer">
                <svg width="60" height="70" viewBox="0 0 60 70" fill="none" stroke="currentColor" strokeWidth="2.600">
                  <circle cx="29" cy="41" r="27.500" />
                  <path d="M24 13V9h-3V1.500h16V9h-3v4M27 43l15-15M54 11l5 5-5 5-5-5z" />
                </svg>
              </TimerButton>
              <UserButton>
                BILL LAM
                <svg width="23" height="13" viewBox="0 0 23 13" fill="none" stroke="currentColor" strokeWidth="5"><path d="m2 2 9.500 8L21 2" /></svg>
              </UserButton>
            </SiteHeader>
            <Crumbs aria-label="Breadcrumb">
              {crumbs.map((c, i) => (
                <React.Fragment key={c}>
                  {i > 0 && " > "}
                  <Crumb href="#">{c}</Crumb>
                </React.Fragment>
              ))}
            </Crumbs>
            <Stage>
              <SideNav aria-label="Previous"><CircleArrow /></SideNav>
              <Card>
                <NumberBadge>24</NumberBadge>
                <Content>
                  <TopRow>
                    <Question>
                      Which expression is equivalent to{" "}
                      <Math>(5<Y /><Op>+</Op>4)<Op>−</Op>2(7<Op>−</Op>2<Y />)</Math>?
                    </Question>
                    <Progress>
                      14 of 17 answered
                      <Meter value={14} max={17} />
                    </Progress>
                  </TopRow>
                  <Choices>
                    {choices.map((c) => (
                      <Choice key={c.id} $on={picked === c.id}>
                        <Radio type="radio" name="answer" checked={picked === c.id} onChange={() => setPicked(c.id)} />
                        <Math>{c.lead}<Y /><Op>{c.op}</Op>{c.tail}</Math>
                      </Choice>
                    ))}
                  </Choices>
                  <Actions>
                    <ActionButton>
                      <svg width="24" height="28" viewBox="0 0 24 28" aria-hidden="true">
                        <rect width="24" height="28" rx="2" fill="#2a3744" />
                        <path d="M3 4h18v5H3zM3 12h3v3H3zm5 0h3v3H8zm5 0h3v3h-3zm5 0h3v3h-3zM3 17h3v3H3zm5 0h3v3H8zm5 0h3v3h-3zm5 0h3v8h-3zM3 22h3v3H3zm5 0h3v3H8zm5 0h3v3h-3z" fill="#fff" />
                      </svg>
                      calculator
                    </ActionButton>
                    <ActionButton $solid>check answer</ActionButton>
                  </Actions>
                </Content>
                <ScrollTrack $w={30} $top={26}><ScrollThumb /></ScrollTrack>
              </Card>
              <SideNav $next aria-label="Next"><CircleArrow right /></SideNav>
            </Stage>
          </PageBody>
          <ScrollTrack $w={31} $top={7}><ScrollThumb /></ScrollTrack>
        </Page>
      </Window>

      <Dock aria-label="Dock">
        {dock.map((d) => (
          <DockItem key={d.name} $open={d.open} aria-label={d.name}><d.icon /></DockItem>
        ))}
        <DockRule />
        <DockItem $open aria-label="Calculator"><Calculator /></DockItem>
        <DockRule />
        <DockItem aria-label="Trash"><Trash /></DockItem>
      </Dock>
    </Desktop>
  );
}
